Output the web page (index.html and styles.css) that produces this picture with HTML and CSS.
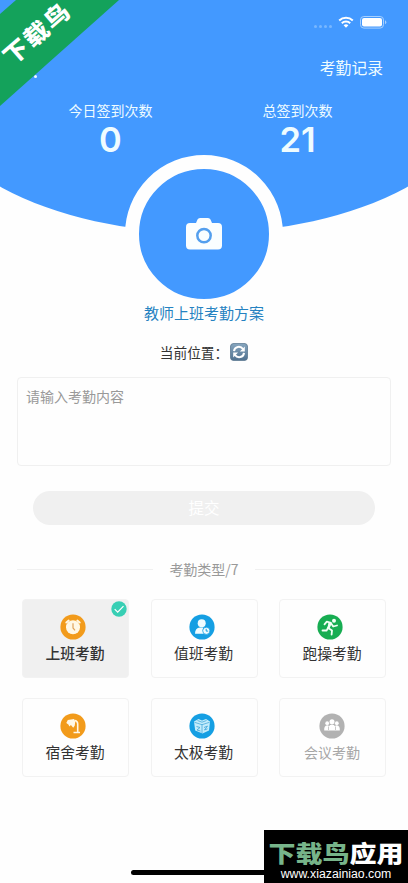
FILE: index.html
```html
<!DOCTYPE html>
<html lang="zh-CN">
<head>
<meta charset="utf-8">
<meta name="viewport" content="width=device-width, initial-scale=1">
<title>考勤</title>
<link rel="stylesheet" href="styles.css">
</head>
<body>
<div class="screen">
  <header class="hero">
    <div class="status">
      <span class="dots"><i></i><i></i><i></i><i></i></span>
      <svg class="wifi" viewBox="0 0 16 12"><path d="M8 11.800 5.600 9.300a3.500 3.500 0 0 1 4.800 0z" fill="#fff"/><path d="M3.800 7.300a6 6 0 0 1 8.400 0M1.200 4.500a9.700 9.700 0 0 1 13.600 0" fill="none" stroke="#fff" stroke-width="2"/></svg>
      <svg class="battery" viewBox="0 0 27 13"><rect x=".5" y=".5" width="23" height="11.600" rx="3.400" fill="none" stroke="#a6d0ff"/><rect x="2" y="2" width="20" height="8.600" rx="2" fill="#fff"/><path d="M25 4.300v4q1.300-.6 1.300-2T25 4.300z" fill="#a6d0ff"/></svg>
    </div>
    <nav class="nav"><i class="nav-dot"></i><a class="record">考勤记录</a></nav>
    <div class="stats">
      <div class="stat"><span class="stat-label">今日签到次数</span><b class="stat-value">0</b></div>
      <div class="stat"><span class="stat-label">总签到次数</span><b class="stat-value">21</b></div>
    </div>
  </header>
  <main class="main">
    <div class="camera">
      <svg viewBox="0 0 36 32"><path d="M4 5h6l1.500-3.500Q12.200 0 14 0h8q1.800 0 2.500 1.500L26 5h6q4 0 4 4v18.500q0 4-4 4H4q-4 0-4-4V9q0-4 4-4z" fill="#fafeff"/><circle cx="18" cy="17.600" r="6.700" fill="none" stroke="#539fee" stroke-width="2.500"/></svg>
    </div>
    <div class="plan">教师上班考勤方案</div>
    <div class="location"><span>当前位置：</span>
      <svg viewBox="0 0 18 18"><defs><linearGradient id="g" x2="0" y2="1"><stop stop-color="#87a6bf"/><stop offset="1" stop-color="#50718f"/></linearGradient></defs><rect x=".4" y=".4" width="17.200" height="17.200" rx="3.500" fill="url(#g)" stroke="#58758e" stroke-width=".8"/><path d="M4 8.200C4.500 3.300 10.500 2.500 13 6M14 9.800C13.500 14.700 7.500 15.500 5 12" fill="none" stroke="#fff" stroke-width="2"/><path d="M14.800 3.500v5H9.900zM3.200 14.500v-5h4.900z" fill="#fff"/></svg>
    </div>
    <div class="note">请输入考勤内容</div>
    <div class="submit">提交</div>
    <div class="divider"><span>考勤类型/7</span></div>
    <div class="grid">
      <div class="card selected">
        <svg class="check" viewBox="0 0 16 16"><circle cx="8" cy="8" r="7.700" fill="#38cfb4"/><path d="m3.700 8.100 3 3 5.800-6" fill="none" stroke="#fff" stroke-width="1.200"/></svg>
        <svg class="icon" viewBox="0 0 26 26"><circle cx="13" cy="13" r="12.600" fill="#f29b1b"/><circle cx="13" cy="13.300" r="7" fill="#fff8e6"/><path d="m6.300 8.600 2.400-2M19.700 8.600l-2.400-2" stroke="#fff8e6" stroke-width="1.900" stroke-linecap="round"/><path d="M13 9.300v4.700l2 2.300" fill="none" stroke="#dfa35c" stroke-width="1.200"/></svg>
        <span>上班考勤</span>
      </div>
      <div class="card">
        <svg class="icon" viewBox="0 0 26 26"><circle cx="13" cy="13" r="12.600" fill="#159fe3"/><circle cx="12.700" cy="9.300" r="4" fill="#effcff"/><path d="M6 19.800q0-5.800 5-6.200h3.500q-1.800 3 .8 6.200z" fill="#effcff"/><circle cx="17.300" cy="16.800" r="3.600" fill="#effcff" stroke="#159fe3" stroke-width=".8"/><path d="M17.200 14.800v2.300h2" fill="none" stroke="#159fe3"/></svg>
        <span>值班考勤</span>
      </div>
      <div class="card">
        <svg class="icon" viewBox="0 0 26 26"><circle cx="13" cy="13" r="12.600" fill="#17ad52"/><circle cx="17" cy="6.700" r="2" fill="#f2fff5"/><path d="m7.500 10.300 2.300-2.600 4.200 1.200-2.800 5.200 3.800 2.500-.4 4M11 13.500 9.700 16.500H5.500M14 9.300l2.200 3.200 3.800-1" fill="none" stroke="#f2fff5" stroke-width="1.800" stroke-linejoin="round" stroke-linecap="round"/><path d="m11.500 8.500 3 .6-1.700 5-2.300-.7z" fill="#f2fff5"/></svg>
        <span>跑操考勤</span>
      </div>
      <div class="card">
        <svg class="icon" viewBox="0 0 26 26"><circle cx="13" cy="13" r="12.600" fill="#f29b1b"/><path d="m6.300 10 1.500-3 3.200-.6 3-.4 1.300 2.700-.6 4-1.500 2-2.300-2.600-1.500 1.500-1-2.200z" fill="#fff8e6"/><path d="M14.500 7.500q3 .2 3.200 3.300V19M13.500 19.500h6.500" fill="none" stroke="#fff8e6" stroke-width="1.600"/></svg>
        <span>宿舍考勤</span>
      </div>
      <div class="card">
        <svg class="icon" viewBox="0 0 26 26"><circle cx="13" cy="13" r="12.600" fill="#159fe3"/><path d="m5 8.500 4.500-2.500 3.500 1.500L17 6l4 2.500-1 9-6.500 3-7.300-3z" fill="#c3ecfb"/><path d="m5.500 9.300 7.500 2.400 7.500-2.400M13 11.500v8.500M8.500 7.500l4.500 1.700 4.500-1.700" fill="none" stroke="#48a9da" stroke-width=".8"/><path d="m7.500 13.500 3.500 1-3 2.500 3.500 1M15 14.500l3.500-1.500-3 4 3-1.200" fill="none" stroke="#48a9da" stroke-width=".9"/></svg>
        <span>太极考勤</span>
      </div>
      <div class="card disabled">
        <svg class="icon" viewBox="0 0 26 26"><circle cx="13" cy="13" r="12.600" fill="#b2b2b2"/><g fill="#fff"><circle cx="8.200" cy="10.200" r="1.900"/><circle cx="17.800" cy="10.200" r="1.900"/><circle cx="13" cy="8.800" r="2.500"/><path d="M5.200 17.500q-.3-4.800 3-5.200 1.500 0 1.800 1 .8-1.800 3-1.800t3 1.800q.3-1 1.800-1 3.300.4 3 5.200z"/></g><path d="M9.500 13.500v3.500M16.500 13.500v3.500" stroke="#b2b2b2" stroke-width=".7"/></svg>
        <span>会议考勤</span>
      </div>
    </div>
  </main>
  <div class="home-bar"></div>
  <div class="ribbon"><div class="ribbon-text">下载鸟</div></div>
  <div class="brand"><div class="brand-name"><em>下载鸟</em>应用</div><div class="brand-url">www.xiazainiao.com</div></div>
</div>
</body>
</html>
```
FILE: styles.css
```css
* { box-sizing: border-box; }
body { margin: 0; background: #fefefe; font-family: "Noto Sans CJK SC", sans-serif; color: #333; }
i, em { font-style: normal; }
.screen { position: relative; width: 408px; height: 883px; overflow: hidden; }
svg { display: block; }

.hero { position: relative; height: 155px; color: #effcff; }
.hero::before { content: ""; position: absolute; z-index: -1; left: -81px; top: -100px; width: 570px; height: 333.4px; background: #4399ff; border-radius: 0 0 285px 285px / 0 0 154px 154px; }
.status { display: flex; align-items: center; justify-content: flex-end; height: 44px; padding-right: 21px; }
.dots { display: flex; gap: 2px; margin: 8px 6px 0 0; }
.dots i { width: 3px; height: 3px; border-radius: 50%; background: #78b7ff; }
.wifi { width: 16px; height: 12px; margin-right: 6px; }
.battery { width: 27px; height: 13px; }
.nav { display: flex; justify-content: space-between; height: 48px; padding: 0 25px 0 34px; }
.nav-dot { width: 3px; height: 3px; margin-top: 31px; border-radius: 50%; background: #effcff; }
.record { font-size: 15.8px; line-height: 48px; }
.stats { display: flex; padding: 8px 17px 0; }
.stat { display: flex; flex: 1; flex-direction: column; align-items: center; }
.stat-label { font-size: 14px; line-height: 21px; }
.stat-value { font: 600 34.5px/38px Inter, sans-serif; }

.main { display: flex; flex-direction: column; align-items: center; padding: 0 17px; }
.camera { position: relative; display: flex; align-items: center; justify-content: center; width: 158px; height: 158px; border: 14px solid #fefefe; border-radius: 50%; background: #4399ff; }
.camera svg { width: 36px; height: 32px; }
.plan { margin-top: -11px; font-size: 15px; line-height: 22px; color: #2582c1; position: relative; }
.location { display: flex; align-items: center; height: 20px; margin-top: 18px; font-size: 13.7px; line-height: 20px; }
.location svg { width: 18px; height: 18px; margin-left: 2px; }
.note { align-self: stretch; height: 89px; margin-top: 15px; padding: 8px; border: 1px solid #f0f0f0; border-radius: 4px; font-size: 14px; line-height: 21px; color: #999; }
.submit { width: 342px; height: 34px; margin-top: 25px; border-radius: 17px; background: #f0f0f0; color: #fff; font-size: 15.5px; line-height: 33px; text-align: center; }
.divider { display: flex; align-items: center; align-self: stretch; gap: 16px; margin-top: 33px; height: 22px; font-size: 14px; line-height: 22px; color: #999; }
.divider::before, .divider::after { content: ""; flex: 1; height: 1px; background: #f0f0f0; }
.grid { display: grid; grid-template-columns: repeat(3, 107px); gap: 20px 21.5px; margin-top: 19px; }
.card { display: flex; flex-direction: column; align-items: center; height: 79px; padding: 14px 1px 0 0; border: 1px solid #f2f2f2; border-radius: 4px; font-size: 14.8px; line-height: 26px; }
.card.selected { position: relative; background: #f0f0f0; font-weight: 500; }
.card.disabled { color: #a6a6a6; font-size: 14px; }
.icon { width: 26px; height: 26px; margin-right: 4px; }
.disabled .icon { margin-right: 0; }
.check { position: absolute; top: 1px; right: 1px; width: 16px; height: 16px; }

.home-bar { position: absolute; left: 131px; top: 870px; width: 146px; height: 5px; border-radius: 3px; background: #000; }
.ribbon { position: absolute; left: 0; top: 0; width: 119px; height: 106px; background: #14a25b; clip-path: polygon(16px 0, 119px 0, 0 106px, 0 14px); }
.ribbon-text { position: absolute; left: -9px; top: 17px; width: 90px; font-size: 25px; font-weight: 900; letter-spacing: 2px; line-height: 30px; text-align: center; color: #fff; transform: rotate(-41deg) scaleY(.92); }
.brand { position: absolute; left: 264px; top: 830px; width: 144px; height: 53px; background: #000; color: #fff; text-align: center; }
.brand-name { height: 35px; font-size: 27px; font-weight: 900; line-height: 46px; white-space: nowrap; transform: scaleY(.86); }
.brand-name em { color: #77b48a; }
.brand-url { font: 12.3px/18px "Liberation Sans", sans-serif; }
```
